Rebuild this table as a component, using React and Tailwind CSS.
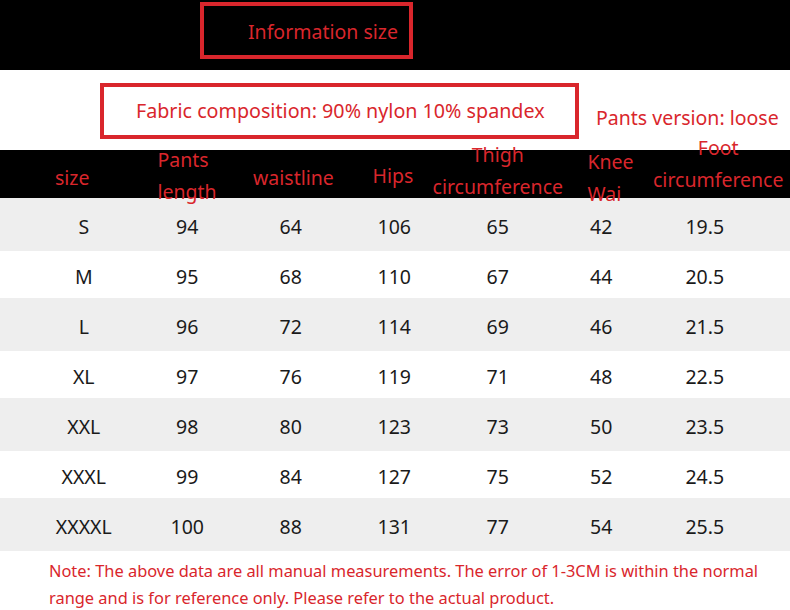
import React from "react";

const rows = [
  ["S", "94", "64", "106", "65", "42", "19.5"],
  ["M", "95", "68", "110", "67", "44", "20.5"],
  ["L", "96", "72", "114", "69", "46", "21.5"],
  ["XL", "97", "76", "119", "71", "48", "22.5"],
  ["XXL", "98", "80", "123", "73", "50", "23.5"],
  ["XXXL", "99", "84", "127", "75", "52", "24.5"],
  ["XXXXL", "100", "88", "131", "77", "54", "25.5"],
];

const font = { fontFamily: '"Noto Sans", "Open Sans", sans-serif' };

export default function App() {
  return (
    <div className="w-[790px] h-[610px] bg-white overflow-hidden text-[#d9262c]" style={font}>
      {/* top black band */}
      <div className="h-[70px] bg-black pl-[200px] pt-[2px]">
        <div className="w-[213px] h-[57px] border-[4px] border-[#d9262c] flex items-center pl-[44px] pt-[3px] text-[19.5px] leading-[24px]">
          Information size
        </div>
      </div>
      {/* fabric band */}
      <div className="h-[80px] flex items-start">
        <div className="ml-[100px] mt-[13px] w-[479px] h-[56px] border-[4px] border-[#d9262c] flex items-center pl-[32px] text-[19.7px] leading-[24px]">
          Fabric composition: 90% nylon 10% spandex
        </div>
        <div className="ml-[17px] mt-[36px] text-[19.5px] leading-[24px] whitespace-nowrap">Pants version: loose</div>
      </div>
      {/* header */}
      <div className="h-[48px] bg-black grid grid-cols-[repeat(7,103.5px)] pl-[32px] text-[19.5px] leading-[32px] relative z-10">
        <div className="flex items-center pl-[23px] -translate-y-[4px]">size</div>
        <div className="flex items-center pl-[22px] -translate-y-[6px]">
          <div>Pants<br />length</div>
        </div>
        <div className="flex items-center pl-[14px] -translate-y-[4px]">waistline</div>
        <div className="flex items-center pl-[30px] -translate-y-[6px]">Hips</div>
        <div className="flex items-center justify-center -translate-y-[11px]">
          <div className="text-center whitespace-nowrap">Thigh<br />circumference</div>
        </div>
        <div className="flex items-center pl-[38px] -translate-y-[4px]">
          <div>Knee<br />Wai</div>
        </div>
        <div className="flex items-center -translate-y-[18px]">
          <div className="text-center whitespace-nowrap">Foot<br />circumference</div>
        </div>
      </div>
      {/* rows */}
      {rows.map((r, i) => (
        <div
          key={r[0]}
          className={
            i % 2 === 0
              ? "h-[53px] bg-[#eeeeee] grid grid-cols-[repeat(7,103.5px)] pl-[32px] pt-[4px] items-center text-[19.5px] text-[#1a1a1a]"
              : "h-[47px] bg-white grid grid-cols-[repeat(7,103.5px)] pl-[32px] pt-[4px] items-center text-[19.5px] text-[#1a1a1a]"
          }
        >
          {r.map((c, j) => (
            <div key={j} className="text-center">
              {c}
            </div>
          ))}
        </div>
      ))}
      {/* note */}
      <div className="pl-[49px] pt-[6px] text-[16.4px] leading-[27px] pr-[20px]">
        Note: The above data are all manual measurements. The error of 1-3CM is within the normal range and is for reference only. Please refer to the actual product.
      </div>
    </div>
  );
}
